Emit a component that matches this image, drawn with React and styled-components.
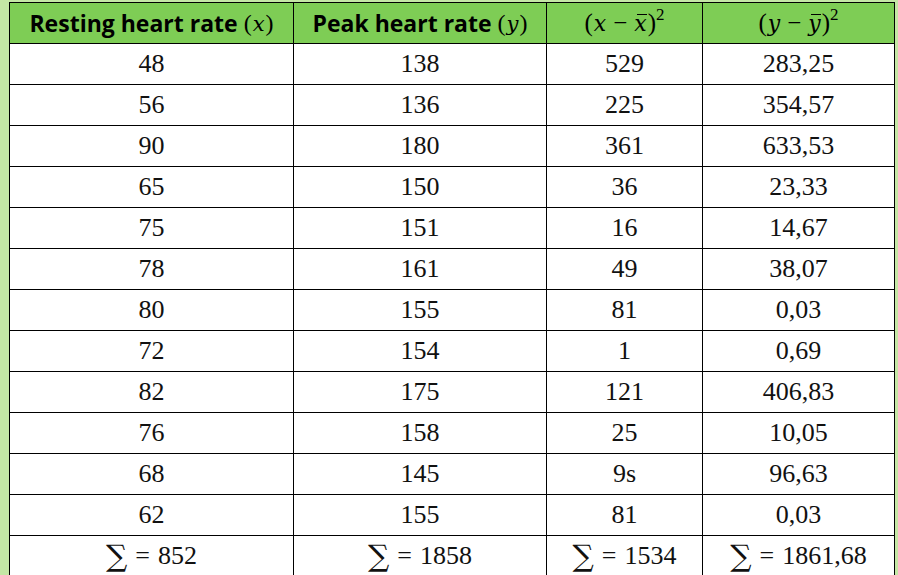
import React from "react";
import styled, { createGlobalStyle } from "styled-components";

const GlobalStyle = createGlobalStyle`
  html, body {
    margin: 0;
    padding: 0;
    background: #c4e7a5;
  }
`;

const Page = styled.div`
  padding: 2px 0 0 9px;
  height: 575px;
  overflow: hidden;
  box-sizing: border-box;
`;

const Grid = styled.div`
  display: grid;
  grid-template-columns: 283px 252px 155px 191px;
  grid-auto-rows: 40px;
  gap: 1px;
  width: max-content;
  background: #000;
  border: 1px solid #000;
`;

const HeadCell = styled.div`
  display: flex;
  align-items: center;
  justify-content: center;
  background: #7ecd55;
  color: #000;
  font-family: "Open Sans", Lato, sans-serif;
  font-weight: 700;
  font-size: 23px;
  letter-spacing: 0;
  white-space: nowrap;
`;

const Cell = styled.div`
  display: flex;
  align-items: center;
  justify-content: center;
  background: #fff;
  color: #111;
  font-family: "Liberation Serif", serif;
  font-size: 26px;
  white-space: nowrap;
`;

const Formula = styled.span`
  font-family: "Liberation Serif", serif;
  font-weight: 400;
  font-size: ${(p) => p.$size || 24}px;
  margin-left: ${(p) => p.$gap || 0}px;
`;

const Var = styled.i`
  font-family: "DejaVu Serif", serif;
  font-style: italic;
  font-size: 0.88em;
  padding: 0 1px;
`;

const Bar = styled(Var)`
  position: relative;
  &::after {
    content: "";
    position: absolute;
    left: 24%;
    right: 4%;
    top: 0.12em;
    height: 1px;
    background: #000;
  }
`;

const Minus = styled.span`
  margin: 0 6px;
`;

const Sup = styled.sup`
  font-size: 0.68em;
  vertical-align: 0.62em;
  line-height: 0;
`;

const Sigma = styled.span`
  font-family: "DejaVu Serif", serif;
  font-size: 1.15em;
  line-height: 1;
  margin-right: 8px;
`;

const Eq = styled.span`
  margin-right: 8px;
`;

const rows = [
  ["48", "138", "529", "283,25"],
  ["56", "136", "225", "354,57"],
  ["90", "180", "361", "633,53"],
  ["65", "150", "36", "23,33"],
  ["75", "151", "16", "14,67"],
  ["78", "161", "49", "38,07"],
  ["80", "155", "81", "0,03"],
  ["72", "154", "1", "0,69"],
  ["82", "175", "121", "406,83"],
  ["76", "158", "25", "10,05"],
  ["68", "145", "9s", "96,63"],
  ["62", "155", "81", "0,03"],
];

const sums = ["852", "1858", "1534", "1861,68"];

const App = () => {
  return (
    <>
      <GlobalStyle />
      <Page>
        <Grid>
          <HeadCell>
            Resting heart rate
            <Formula $gap={6}>(<Var>x</Var>)</Formula>
          </HeadCell>
          <HeadCell>
            Peak heart rate
            <Formula $gap={6}>(<Var>y</Var>)</Formula>
          </HeadCell>
          <HeadCell>
            <Formula $size={25}>
              (<Var>x</Var>
              <Minus>−</Minus>
              <Bar>x</Bar>)<Sup>2</Sup>
            </Formula>
          </HeadCell>
          <HeadCell>
            <Formula $size={25}>
              (<Var>y</Var>
              <Minus>−</Minus>
              <Bar>y</Bar>)<Sup>2</Sup>
            </Formula>
          </HeadCell>
          {rows.map((r, i) =>
            r.map((v, j) => <Cell key={i + "-" + j}>{v}</Cell>)
          )}
          {sums.map((s, j) => (
            <Cell key={"s" + j}>
              <Sigma>∑</Sigma>
              <Eq>=</Eq>
              {s}
            </Cell>
          ))}
        </Grid>
      </Page>
    </>
  );
};

export default App;
